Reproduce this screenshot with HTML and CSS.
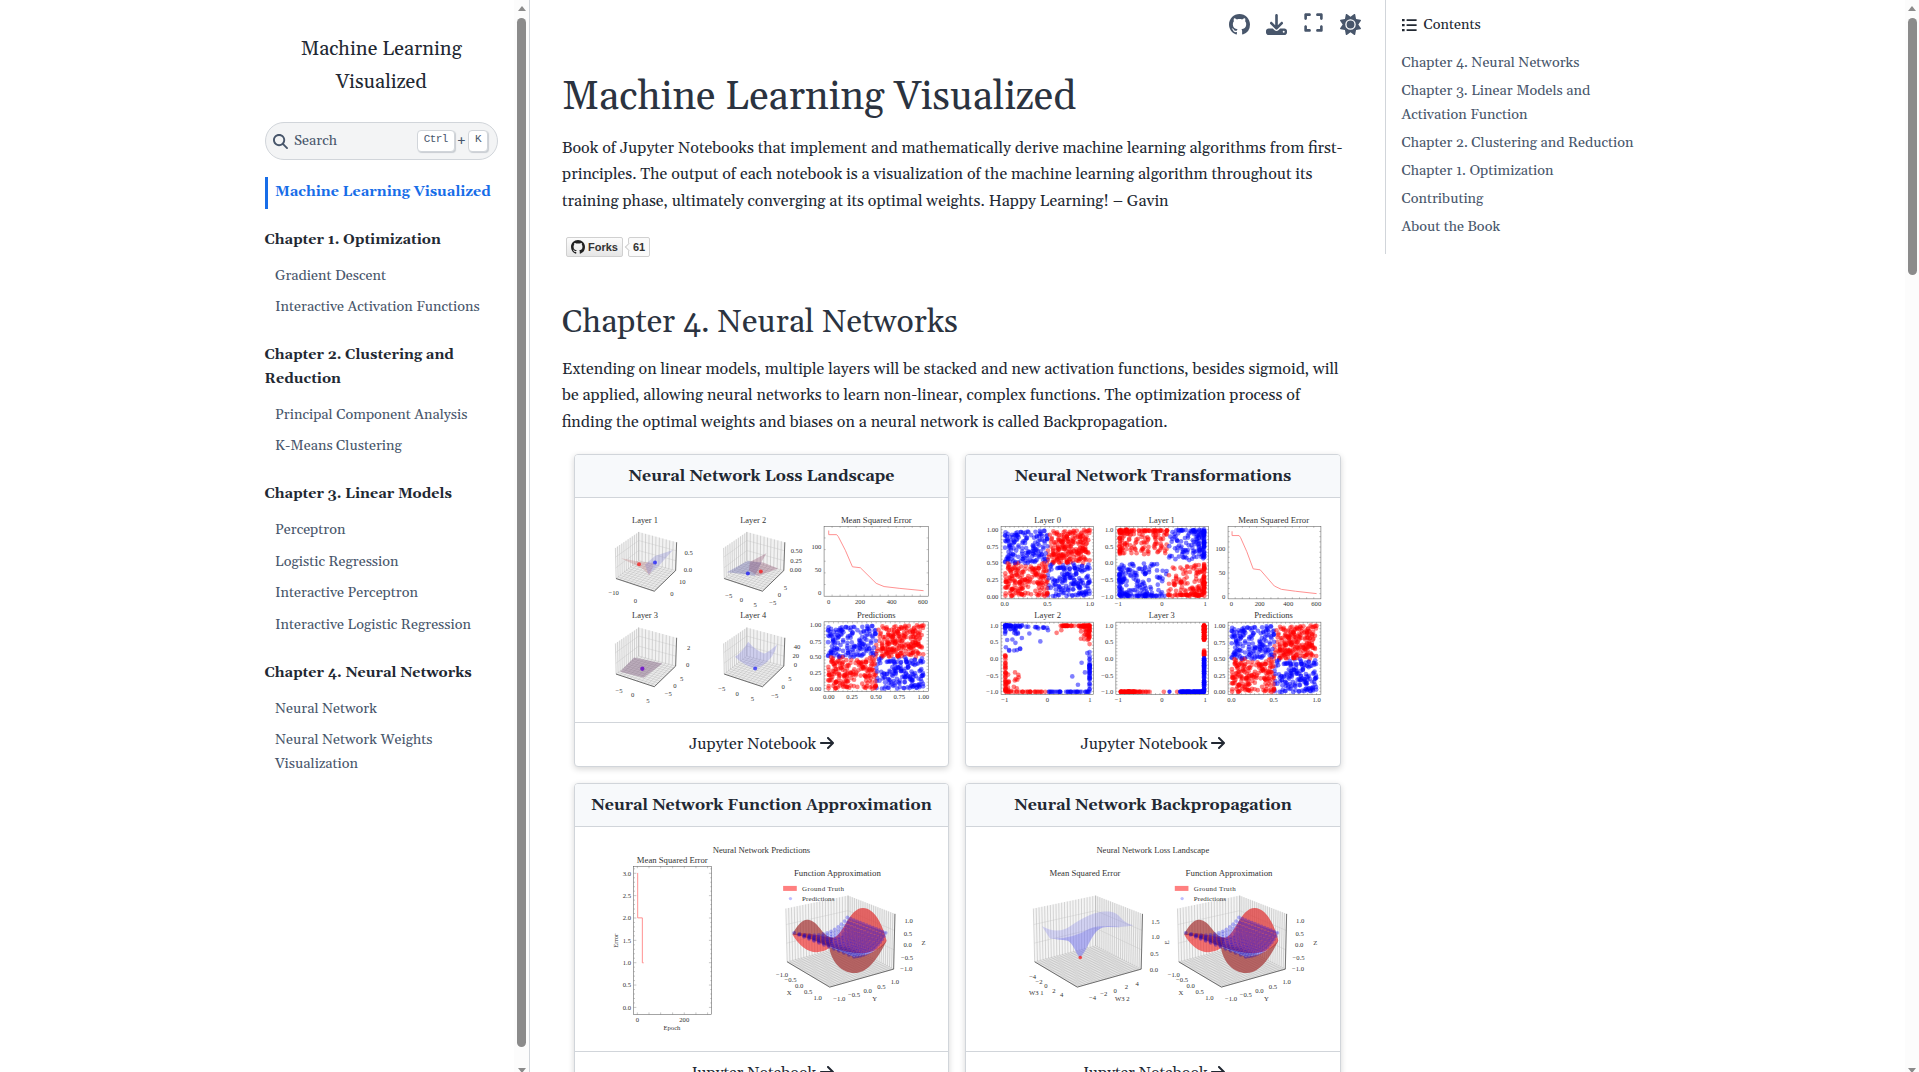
FILE: index.html
```html
<!DOCTYPE html>
<html lang="en">
<head>
<meta charset="utf-8">
<title>Machine Learning Visualized</title>
<link rel="stylesheet" href="styles.css">
</head>
<body>
<svg class="defs" aria-hidden="true">
  <symbol id="i-github" viewBox="0 0 16 16"><path d="M8 0C3.58 0 0 3.58 0 8c0 3.54 2.29 6.53 5.47 7.59.4.07.55-.17.55-.38 0-.19-.01-.82-.01-1.49-2.01.37-2.53-.49-2.69-.94-.09-.23-.48-.94-.82-1.13-.28-.15-.68-.52-.01-.53.63-.01 1.08.58 1.23.82.72 1.21 1.87.87 2.33.66.07-.52.28-.87.51-1.07-1.78-.2-3.64-.89-3.64-3.95 0-.87.31-1.59.82-2.15-.08-.2-.36-1.02.08-2.12 0 0 .67-.21 2.2.82.64-.18 1.32-.27 2-.27s1.36.09 2 .27c1.53-1.04 2.2-.82 2.2-.82.44 1.1.16 1.92.08 2.12.51.56.82 1.27.82 2.15 0 3.07-1.87 3.75-3.65 3.95.29.25.54.73.54 1.48 0 1.07-.01 1.93-.01 2.2 0 .21.15.46.55.38A8.01 8.01 0 0016 8c0-4.42-3.58-8-8-8z"/></symbol>
  <symbol id="i-arrow" viewBox="0 0 448 512"><path d="M438.6 278.6c12.5-12.5 12.5-32.8 0-45.3l-160-160c-12.5-12.5-32.8-12.5-45.3 0s-12.5 32.8 0 45.3L338.8 224 32 224c-17.7 0-32 14.3-32 32s14.3 32 32 32l306.7 0L233.4 393.4c-12.5 12.5-12.5 32.8 0 45.3s32.8 12.5 45.3 0l160-160z"/></symbol>
</svg>
<div class="page">
  <aside class="sidebar">
    <div class="sidebar-inner">
      <div class="brand">Machine Learning<br>Visualized</div>
      <div class="search">
        <svg class="search-icon" viewBox="0 0 512 512"><path d="M416 208c0 45.9-14.9 88.3-40 122.7L502.6 457.4c12.5 12.5 12.5 32.8 0 45.3s-32.8 12.5-45.3 0L330.7 376c-34.4 25.2-76.8 40-122.7 40C93.1 416 0 322.9 0 208S93.1 0 208 0S416 93.1 416 208zM208 352a144 144 0 1 0 0-288 144 144 0 1 0 0 288z"/></svg>
        <span class="search-label">Search</span>
        <kbd>Ctrl</kbd><span class="plus">+</span><kbd>K</kbd>
      </div>
      <nav class="nav">
        <a class="item active">Machine Learning Visualized</a>
        <p class="caption">Chapter 1. Optimization</p>
        <a class="item">Gradient Descent</a>
        <a class="item">Interactive Activation Functions</a>
        <p class="caption">Chapter 2. Clustering and<br>Reduction</p>
        <a class="item">Principal Component Analysis</a>
        <a class="item">K-Means Clustering</a>
        <p class="caption">Chapter 3. Linear Models</p>
        <a class="item">Perceptron</a>
        <a class="item">Logistic Regression</a>
        <a class="item">Interactive Perceptron</a>
        <a class="item">Interactive Logistic Regression</a>
        <p class="caption">Chapter 4. Neural Networks</p>
        <a class="item">Neural Network</a>
        <a class="item">Neural Network Weights<br>Visualization</a>
      </nav>
    </div>
    <div class="scrollbar"><i class="up"></i><b class="thumb side-thumb"></b><i class="down"></i></div>
  </aside>

  <main class="main">
    <div class="toolbar">
      <svg class="tool" viewBox="0 0 16 16"><use href="#i-github"/></svg>
      <svg class="tool" viewBox="0 0 512 512"><path d="M288 32c0-17.7-14.3-32-32-32s-32 14.3-32 32V274.7l-73.4-73.4c-12.5-12.5-32.8-12.5-45.3 0s-12.5 32.8 0 45.3l128 128c12.5 12.5 32.8 12.5 45.3 0l128-128c12.5-12.5 12.5-32.8 0-45.3s-32.8-12.5-45.3 0L288 274.7V32zM64 352c-35.3 0-64 28.7-64 64v32c0 35.3 28.7 64 64 64H448c35.3 0 64-28.7 64-64V416c0-35.3-28.7-64-64-64H346.5l-45.3 45.3c-25 25-65.5 25-90.5 0L165.5 352H64zm368 56a24 24 0 1 1 0 48 24 24 0 1 1 0-48z"/></svg>
      <svg class="tool expand" viewBox="0 0 448 512"><path d="M32 32C14.3 32 0 46.3 0 64v96c0 17.7 14.3 32 32 32s32-14.3 32-32V96h64c17.7 0 32-14.3 32-32s-14.3-32-32-32H32zM64 352c0-17.7-14.3-32-32-32s-32 14.3-32 32v96c0 17.7 14.3 32 32 32h96c17.7 0 32-14.3 32-32s-14.3-32-32-32H64V352zM320 32c-17.7 0-32 14.3-32 32s14.3 32 32 32h64v64c0 17.7 14.3 32 32 32s32-14.3 32-32V64c0-17.7-14.3-32-32-32H320zM448 352c0-17.7-14.3-32-32-32s-32 14.3-32 32v64H320c-17.7 0-32 14.3-32 32s14.3 32 32 32h96c17.7 0 32-14.3 32-32V352z"/></svg>
      <svg class="tool" viewBox="0 0 512 512"><path d="M361.5 1.2c5 2.1 8.6 6.6 9.6 11.9L391 121l107.9 19.8c5.3 1 9.8 4.6 11.9 9.6s1.5 10.7-1.6 15.2L446.9 256l62.3 90.3c3.1 4.5 3.7 10.2 1.6 15.2s-6.6 8.6-11.9 9.6L391 391 371.1 498.9c-1 5.3-4.6 9.8-9.6 11.9s-10.7 1.5-15.2-1.6L256 446.9l-90.3 62.3c-4.5 3.1-10.2 3.7-15.2 1.6s-8.6-6.6-9.6-11.9L121 391 13.1 371.1c-5.3-1-9.8-4.6-11.9-9.6s-1.5-10.7 1.6-15.2L65.1 256 2.8 165.7c-3.1-4.5-3.7-10.2-1.6-15.2s6.6-8.6 11.9-9.6L121 121 140.9 13.1c1-5.3 4.6-9.8 9.6-11.9s10.7-1.5 15.2 1.6L256 65.1 346.3 2.8c4.5-3.1 10.2-3.7 15.2-1.6zM160 256a96 96 0 1 1 192 0 96 96 0 1 1 -192 0zm224 0a128 128 0 1 0 -256 0 128 128 0 1 0 256 0z"/></svg>
    </div>
    <article class="article">
      <h1>Machine Learning Visualized</h1>
      <p class="text">Book of Jupyter Notebooks that implement and mathematically derive machine learning algorithms from first-<br>principles. The output of each notebook is a visualization of the machine learning algorithm throughout its<br>training phase, ultimately converging at its optimal weights. Happy Learning! – Gavin</p>
      <div class="forks">
        <span class="fork-btn"><svg class="fork-icon" viewBox="0 0 16 16"><use href="#i-github"/></svg>Forks</span>
        <span class="fork-count">61</span>
      </div>
      <h2>Chapter 4. Neural Networks</h2>
      <p class="text">Extending on linear models, multiple layers will be stacked and new activation functions, besides sigmoid, will<br>be applied, allowing neural networks to learn non-linear, complex functions. The optimization process of<br>finding the optimal weights and biases on a neural network is called Backpropagation.</p>
      <div class="cards">
        <section class="card">
          <h3>Neural Network Loss Landscape</h3>
          <svg class="plot" id="plot-landscape" viewBox="30 158 1120 673"></svg>
          <a class="card-link">Jupyter Notebook <svg class="arrow" viewBox="0 0 448 512"><use href="#i-arrow"/></svg></a>
        </section>
        <section class="card">
          <h3>Neural Network Transformations</h3>
          <svg class="plot" id="plot-transform" viewBox="33 158 1120 673"></svg>
          <a class="card-link">Jupyter Notebook <svg class="arrow" viewBox="0 0 448 512"><use href="#i-arrow"/></svg></a>
        </section>
        <section class="card">
          <h3>Neural Network Function Approximation</h3>
          <svg class="plot" id="plot-approx" viewBox="30 155 1120 673"></svg>
          <a class="card-link">Jupyter Notebook <svg class="arrow" viewBox="0 0 448 512"><use href="#i-arrow"/></svg></a>
        </section>
        <section class="card">
          <h3>Neural Network Backpropagation</h3>
          <svg class="plot" id="plot-backprop" viewBox="33 155 1120 673"></svg>
          <a class="card-link">Jupyter Notebook <svg class="arrow" viewBox="0 0 448 512"><use href="#i-arrow"/></svg></a>
        </section>
      </div>
    </article>
  </main>

  <aside class="toc">
    <div class="toc-title">
      <svg class="list-icon" viewBox="0 0 16 14"><path d="M0 1h2.6v2.2H0zM0 6h2.6v2.2H0zM0 11h2.6v2.2H0zM4.6 1.2h10v1.8h-10zM4.6 6.2h10v1.8h-10zM4.6 11.2h10v1.8h-10z"/></svg>Contents
    </div>
    <a>Chapter 4. Neural Networks</a>
    <a>Chapter 3. Linear Models and<br>Activation Function</a>
    <a>Chapter 2. Clustering and Reduction</a>
    <a>Chapter 1. Optimization</a>
    <a>Contributing</a>
    <a>About the Book</a>
  </aside>
  <div class="scrollbar page-bar"><i class="up"></i><b class="thumb page-thumb"></b><i class="down"></i></div>
</div>
<script src="plots.js"></script>
</body>
</html>
```
FILE: styles.css
```css
* { box-sizing: border-box; }
body {
  margin: 0;
  height: 1072px;
  overflow: hidden;
  background: #fff;
  color: #222832;
  font-family: Georgia, Gelasio, "Liberation Serif", serif;
  font-size: 16px;
  line-height: 1.65;
}
.defs { display: none; }
.page { display: flex; height: 1072px; }
h1, h2, h3, p { margin: 0; font-weight: 400; }

.sidebar {
  display: flex;
  justify-content: space-between;
  width: 530px;
  flex: none;
  border-right: 1px solid #d1d5da;
}
.sidebar-inner { width: 498px; padding: 33px 0 0 264.5px; flex: none; }
.brand { font-size: 20px; line-height: 33px; text-align: center; height: 66px; }
.search {
  display: flex;
  align-items: center;
  height: 38px;
  margin-top: 23px;
  padding: 0 9px 0 7px;
  border: 1px solid #d1d5da;
  border-radius: 19px;
  background: #f3f4f5;
  color: #48566b;
}
.search-icon { width: 15px; height: 15px; fill: #48566b; }
.search-label { flex: 1; margin-left: 6.5px; padding-top: 1px; font-size: 14.4px; }
kbd {
  height: 22px;
  padding: 0 6px;
  border: 1px solid #d1d5da;
  border-radius: 4px;
  background: #fff;
  box-shadow: 1px 1px 1px #c9cdd2;
  font: 11px/17px "Liberation Mono", monospace;
  letter-spacing: -.6px;
}
.plus { margin: 0 2px; padding-top: 2px; font-size: 14.4px; }
.nav { padding-top: 17px; font-size: 14.4px; line-height: 23.76px; }
.item { display: block; padding: 4px 0 4px 10.5px; color: #48566b; white-space: nowrap; }
.item.active {
  padding-left: 7.5px;
  border-left: 3px solid #176de8;
  color: #176de8;
  font-weight: 700;
}
.caption { margin: 20px 0 8px; font-weight: 700; white-space: nowrap; }

.scrollbar {
  display: flex;
  flex-direction: column;
  align-items: center;
  width: 15px;
  height: 1072px;
  padding-top: 6px;
  background: #fcfcfc;
}
.up { border: 4.5px solid transparent; border-top: 0; border-bottom: 5px solid #8b8b8b; }
.down { margin-top: auto; margin-bottom: -1px; border: 4.5px solid transparent; border-bottom: 0; border-top: 5px solid #8b8b8b; }
.thumb { width: 9px; margin-top: 7px; border-radius: 5px; background: #8b8b8b; }
.side-thumb { height: 1029px; }
.page-thumb { height: 257px; }
.page-bar { margin-left: auto; width: 14px; }

.main { width: 855px; flex: none; }
.toolbar {
  display: flex;
  align-items: center;
  justify-content: flex-end;
  gap: 16px;
  height: 48px;
  padding-right: 24px;
}
.tool { width: 21px; height: 21px; fill: #48566b; }
.expand { position: relative; top: -1.5px; }
.article { padding: 24px 38px 0 32px; }
h1 { font-size: 40px; line-height: 52px; color: #2b3340; }
.text { margin-top: 11px; height: 79px; line-height: 26.4px; white-space: nowrap; }
.forks {
  display: flex;
  gap: 5px;
  margin: 23px 0 0 4px;
  height: 20px;
  font: 700 11px/18px "Liberation Sans", Arial, sans-serif;
  color: #333;
}
.fork-btn {
  display: flex;
  align-items: center;
  gap: 3px;
  width: 57px;
  padding-left: 4px;
  border: 1px solid #d0d0d0;
  border-radius: 2px;
  background: linear-gradient(#fcfcfc, #e6e6e6);
}
.fork-icon { width: 14px; height: 14px; fill: #222; }
.fork-count {
  position: relative;
  width: 22px;
  border: 1px solid #d0d0d0;
  border-radius: 2px;
  background: #fafafa;
  text-align: center;
}
.fork-count::before {
  content: "";
  position: absolute;
  left: -3.5px;
  top: 6px;
  width: 5px;
  height: 5px;
  border: solid #d0d0d0;
  border-width: 0 0 1px 1px;
  background: #fafafa;
  transform: rotate(45deg);
}
h2 { margin-top: 45px; font-size: 32px; line-height: 42px; color: #2b3340; }
h2 + .text { margin-top: 12px; }
.cards {
  display: grid;
  grid-template-columns: 375px 376px;
  gap: 16px;
  margin: 19px 0 0 12px;
}
.card {
  display: flex;
  flex-direction: column;
  height: 313px;
  border: 1px solid #d1d5da;
  border-radius: 4px;
  box-shadow: 0 2px 6px rgba(0, 0, 0, .16);
  background: #fff;
  overflow: hidden;
}
h3 {
  height: 43px;
  border-bottom: 1px solid #d1d5da;
  background: #f7f9fb;
  font-size: 16px;
  font-weight: 700;
  line-height: 42px;
  text-align: center;
  white-space: nowrap;
}
.plot { display: block; width: 373px; height: 224px; }
.plot text { font-family: "Liberation Serif", serif; fill: #333; }
.card-link { flex: 1; border-top: 1px solid #d1d5da; line-height: 42px; text-align: center; }
.arrow { width: 14px; height: 16px; vertical-align: -2px; fill: #222832; }

.toc {
  width: 262px;
  height: 254px;
  padding: 12px 0 0 15.5px;
  border-left: 1px solid #d1d5da;
  font-size: 14.4px;
  line-height: 24px;
  white-space: nowrap;
}
.toc a { display: block; padding: 2px 0; color: #48566b; }
.toc-title { display: flex; align-items: center; height: 26px; margin-bottom: 10.5px; }
.list-icon { width: 16px; height: 14px; margin-right: 6px; fill: #222832; }
```
FILE: plots.js
```js
const RED = '#ff0000', BLUE = '#0000ff';
let seed = 7;
const rnd = () => (seed = (seed * 16807) % 2147483647) / 2147483647;
const lerp = (a, b, t) => [a[0] + (b[0] - a[0]) * t, a[1] + (b[1] - a[1]) * t];
const dot = (x, y, c, r = 7, o = .5) => `<circle cx="${x.toFixed(1)}" cy="${y.toFixed(1)}" r="${r}" fill="${c}" fill-opacity="${o}"/>`;
const seg = (a, b, c = '#999', w = 1, o = 1) => `<path d="M${a}L${b}" stroke="${c}" stroke-width="${w}" opacity="${o}" fill="none"/>`;
const poly = (pts, fill, o = 1) => `<path d="M${pts.join('L')}Z" fill="${fill}" fill-opacity="${o}"/>`;
const title = (s, x, y, w) => `<text x="${x - w / 2}" y="${y + 8}" font-size="25" textLength="${w}" lengthAdjust="spacingAndGlyphs">${s}</text>`;
const tick = (s, x, y) => `<text x="${x}" y="${y + 7}" font-size="20" text-anchor="middle">${s}</text>`;
const labels = list => list.map(l => tick(...l)).join('');

/* Plot frame with inward ticks on all sides, labels outside. */
function frame(x0, y0, x1, y1, nx, ny, xs, ys) {
  let s = `<rect x="${x0}" y="${y0}" width="${x1 - x0}" height="${y1 - y0}" fill="none" stroke="#555" stroke-width="1.6"/>`;
  for (let i = 1; i < nx; i++) { const x = x0 + (x1 - x0) * i / nx; s += seg([x, y0], [x, y0 + 5], '#555') + seg([x, y1], [x, y1 - 5], '#555'); }
  for (let i = 1; i < ny; i++) { const y = y0 + (y1 - y0) * i / ny; s += seg([x0, y], [x0 + 5, y], '#555') + seg([x1, y], [x1 - 5, y], '#555'); }
  xs.forEach(([t, x]) => s += tick(t, x, y1 + 16));
  ys.forEach(([t, y]) => s += `<text x="${x0 - 8}" y="${y + 7}" font-size="20" text-anchor="end">${t}</text>`);
  return s;
}

const xor = [];
while (xor.length < 720) {
  const x = rnd(), y = rnd();
  if (Math.hypot(x - .59, y - .35) < .06) continue;
  xor.push([x, y, (x < .5) === (y > .5) ? BLUE : RED]);
}
const quadrants = (x0, y0, x1, y1) => xor.map(([x, y, c]) => dot(x0 + x * (x1 - x0), y1 - y * (y1 - y0), c)).join('');

/* Isometric box: L/B/R top corners, l/f/r floor corners, b the back floor corner. */
function box(p, n) {
  let s = poly([p.L, p.B, p.b, p.l], '#f5f5f5') + poly([p.B, p.R, p.r, p.b], '#f2f2f2') + poly([p.l, p.b, p.r, p.f], '#ececec');
  for (let i = 0; i <= n; i++) {
    const t = i / n;
    s += seg(lerp(p.L, p.B, t), lerp(p.l, p.b, t), '#999', 1.5, .75) + seg(lerp(p.B, p.R, t), lerp(p.b, p.r, t), '#999', 1.5, .75);
    s += seg(lerp(p.l, p.b, t), lerp(p.f, p.r, t), '#aaa', 1) + seg(lerp(p.l, p.f, t), lerp(p.b, p.r, t), '#aaa', 1);
  }
  for (const t of [.3, .65]) s += seg(lerp(p.L, p.l, t), lerp(p.B, p.b, t), '#bbb') + seg(lerp(p.B, p.b, t), lerp(p.R, p.r, t), '#bbb');
  return s + seg(p.l, p.f, '#333', 2) + seg(p.f, p.r, '#333', 2) + seg(p.R, p.r, '#444', 2);
}
const small = (dx, dy) => {
  const q = (x, y) => [x + dx, y + dy];
  return box({ L: q(151, 308), B: q(221, 260), R: q(335, 291), l: q(153, 400), b: q(221, 346), r: q(332, 376), f: q(268, 438) }, 11);
};
const big = dx => {
  const q = (x, y) => [x + dx, y];
  return box({ L: q(663, 400), B: q(850, 361), R: q(991, 416), l: q(667, 560), b: q(850, 512), r: q(987, 582), f: q(795, 636) }, 22);
};

const MSE = [[0, 135], [0, 126], [50, 126], [60, 122], [105, 92], [150, 56], [200, 54], [300, 20], [350, 13], [450, 9], [600, 4]];
const curve = (x0, x1, yz, yh) => `<path d="M${MSE.map(([x, y]) => [x0 + (x1 - x0) * x / 600, yz + (yh - yz) * y / 100]).join('L')}" fill="none" stroke="#ff8080" stroke-width="2.6"/>`;
const put = (id, s) => document.getElementById(id).innerHTML = s;

put('plot-landscape',
  title('Layer 1', 240, 224, 78) + title('Layer 2', 565, 224, 78) + title('Layer 3', 240, 511, 78) + title('Layer 4', 565, 511, 78) +
  title('Mean Squared Error', 935, 224, 213) + title('Predictions', 935, 511, 116) +
  small(0, 0) + small(325, 0) + small(0, 287) + small(325, 287) +
  poly([[168, 339], [221, 349], [268, 353], [254, 390], [232, 370]], '#c08080', .35) + poly([[250, 388], [240, 358], [270, 332], [324, 314], [285, 358]], '#8080d0', .32) +
  dot(222, 357, RED, 6, .65) + dot(270, 352, BLUE, 6, .65) +
  poly([[486, 381], [548, 347], [590, 352], [570, 392], [548, 388]], '#7070b0', .42) + poly([[555, 350], [605, 324], [590, 350], [640, 370], [580, 392], [552, 375]], '#905070', .35) +
  dot(549, 385, BLUE, 6, .65) + dot(588, 379, RED, 6, .65) +
  poly([[165, 680], [207, 637], [292, 655], [236, 698]], '#806080', .45) + dot(232, 671, '#60c', 6.5, .8) +
  `<path d="M510 635Q530 625 550 590Q575 620 600 625Q620 615 637 598Q625 650 572 671Q535 660 510 635Z" fill="#7070e0" fill-opacity=".27"/>` + dot(571, 670, BLUE, 6, .6) +
  labels([['0.5', 371, 321], ['0.0', 369, 374], ['10', 352, 409], ['0', 321, 444], ['−10', 146, 443], ['0', 211, 466], ['0.50', 695, 315], ['0.25', 694, 346], ['0.00', 692, 373], ['5', 662, 427], ['0', 644, 447], ['−5', 624, 471], ['−5', 492, 451], ['0', 530, 463], ['5', 571, 479],
    ['2', 371, 607], ['0', 368, 660], ['5', 350, 701], ['0', 330, 722], ['−5', 310, 747], ['−5', 162, 737], ['0', 203, 750], ['5', 249, 767], ['40', 697, 604], ['20', 693, 633], ['0', 692, 660], ['5', 675, 701], ['0', 655, 724], ['−5', 630, 752], ['−5', 471, 732], ['0', 517, 745], ['5', 563, 762]]) +
  frame(778, 243, 1091, 453, 13, 6, [['0', 792], ['200', 886], ['400', 981], ['600', 1075]], [['100', 304], ['50', 374], ['0', 442]]) + curve(792, 1077, 442, 304) +
  frame(778, 530, 1091, 740, 22, 22, [['0.00', 792], ['0.25', 862], ['0.50', 934], ['0.75', 1004], ['1.00', 1076]], [['1.00', 540], ['0.75', 589], ['0.50', 635], ['0.25', 683], ['0.00', 730]]) + quadrants(790, 540, 1077, 731));

/* Points squeezed toward a corner or an edge after each layer's activation. */
function corner(n, cx, cy, dx, dy, c, k) {
  let s = '';
  for (let i = 0; i < n; i++) s += dot(cx + dx * Math.pow(rnd(), k), cy + dy * Math.pow(rnd(), k), c);
  return s;
}
const edge = (n, x, y, dx, dy, c, k = 1) => Array.from({ length: n }, () => { const t = Math.pow(rnd(), k); return dot(x + dx * t, y + dy * t, c); }).join('');
put('plot-transform',
  title('Layer 0', 278, 224, 80) + title('Layer 1', 621, 224, 78) + title('Mean Squared Error', 957, 224, 213) +
  title('Layer 2', 278, 512, 80) + title('Layer 3', 621, 512, 78) + title('Predictions', 957, 512, 116) +
  frame(138, 243, 416, 461, 21, 22, [['0.0', 149], ['0.5', 277], ['1.0', 405]], [['1.00', 254], ['0.75', 304], ['0.50', 353], ['0.25', 403], ['0.00', 453]]) + quadrants(150, 254, 405, 453) +
  frame(483, 243, 761, 461, 21, 22, [['−1', 490], ['0', 621], ['1', 751]], [['1.0', 254], ['0.5', 304], ['0.0', 353], ['−0.5', 403], ['−1.0', 453]]) +
  corner(120, 493, 253, 147, 75, RED, 1.5) + edge(34, 493, 256, 145, 0, RED) + edge(18, 495, 255, 0, 75, RED) +
  corner(120, 748, 254, -107, 94, BLUE, 1.6) + edge(34, 748, 250, 0, 88, BLUE) +
  corner(80, 493, 453, 100, -75, BLUE, 1.2) + edge(36, 493, 452, 140, 0, BLUE) + edge(22, 494, 365, 0, 85, BLUE) + corner(32, 497, 350, 110, 40, BLUE, 1.1) + corner(14, 640, 450, -36, -75, BLUE, 1) +
  corner(120, 749, 453, -108, -95, RED, 1.6) + edge(30, 748, 350, 0, 100, RED) + edge(24, 640, 449, 108, 0, RED) +
  frame(820, 243, 1099, 461, 13, 14, [['0', 830], ['200', 915], ['400', 1001], ['600', 1085]], [['100', 310], ['50', 382], ['0', 453]]) + curve(832, 1086, 451, 308) +
  frame(138, 531, 416, 749, 21, 22, [['−1', 149], ['0', 277], ['1', 405]], [['1.0', 541], ['0.5', 591], ['0.0', 641], ['−0.5', 691], ['−1.0', 740]]) +
  corner(45, 150, 541, 55, 80, BLUE, 3) + edge(20, 150, 541, 145, 8, BLUE, 1.3) + edge(32, 404, 620, 0, 118, BLUE) + edge(34, 280, 740, 124, 0, BLUE) +
  edge(34, 312, 542, 92, 0, RED) + corner(45, 404, 541, -28, 44, RED, 2) + edge(25, 151, 630, 0, 108, RED) + corner(24, 151, 739, 48, -60, RED, 2) + edge(28, 150, 740, 130, 0, RED) +
  [[256, 589], [186, 615], [162, 615], [223, 565], [250, 550], [279, 555], [397, 624], [380, 653], [390, 682], [352, 694], [369, 719], [183, 566]].map(p => dot(...p, BLUE)).join('') +
  [[150, 631], [180, 682], [182, 702], [305, 563], [319, 555], [404, 597]].map(p => dot(...p, RED)).join('') +
  frame(483, 531, 761, 749, 21, 22, [['−1', 490], ['0', 621], ['1', 751]], [['1.0', 541], ['0.5', 591], ['0.0', 641], ['−0.5', 691], ['−1.0', 740]]) +
  edge(80, 748, 540, 0, 45, RED) + edge(12, 748, 612, 0, 20, RED) + edge(55, 497, 740, 46, 0, RED) + edge(15, 535, 740, 54, 0, RED) + dot(627, 740, RED) + dot(667, 740, RED) +
  edge(60, 748, 640, 0, 98, BLUE) + edge(85, 676, 740, 72, 0, BLUE) + dot(644, 740, BLUE, 6.5, .8) +
  frame(820, 531, 1099, 749, 21, 22, [['0.0', 830], ['0.5', 957], ['1.0', 1086]], [['1.00', 541], ['0.75', 592], ['0.50', 641], ['0.25', 691], ['0.00', 740]]) + quadrants(831, 541, 1086, 741));

/* Saddle surface with the predicted sheet of dots on top. */
function saddle(dx) {
  let s = title('Function Approximation', 818 + dx, 295, 261) +
    `<rect x="${655 + dx}" y="332" width="41" height="15" fill="#ff8080"/>` + dot(677 + dx, 370, BLUE, 5, .25) + big(dx) +
    `<text x="${712 + dx}" y="347" font-size="21" textLength="126">Ground Truth</text><text x="${712 + dx}" y="377" font-size="21" textLength="97">Predictions</text>` +
    `<g transform="translate(${dx} 0)"><path d="M683 478C705 515 730 532 757 531C780 529 792 522 796 515L806 488C770 487 730 465 683 478Z" fill="#f02828" fill-opacity=".65"/>` +
    `<path d="M806 488C840 475 853 398 895 398C930 398 955 450 966 497C940 540 880 545 796 515Z" fill="#e03838" fill-opacity=".75"/>` +
    `<path d="M683 478C700 445 715 434 727 434C762 434 770 487 806 488L796 515C760 500 720 482 683 478Z" fill="#a02a2a" fill-opacity=".68"/>` +
    `<path d="M966 497C935 560 905 594 870 594C830 594 800 560 793 515L868 545Q930 540 966 497Z" fill="#a02a2a" fill-opacity=".68"/>` +
    `<path d="M766 478Q800 495 832 482L850 430L965 472Q930 540 868 545L795 515Z" fill="#4018a0" fill-opacity=".25"/>`;
  const quad = (a, c, b, t) => lerp(lerp(a, c, t), lerp(c, b, t), t);
  for (let i = 0; i <= 13; i++) for (let j = 0; j <= 12; j++) {
    const p = lerp(quad([688, 473], [795, 500], [848, 427], i / 13), quad([868, 545], [930, 540], [963, 473], i / 13), j / 12);
    s += dot(p[0], p[1], i < 4 ? '#1000c8' : BLUE, 5.8, i < 4 ? .36 : .28);
  }
  return s + '</g>' + labels([['1.0', 1032 + dx, 437], ['0.5', 1030 + dx, 475], ['0.0', 1029 + dx, 510], ['−0.5', 1027 + dx, 547], ['−1.0', 1025 + dx, 582], ['Z', 1077 + dx, 502],
    ['−1.0', 652 + dx, 598], ['−0.5', 677 + dx, 614], ['0.0', 703 + dx, 631], ['0.5', 730 + dx, 650], ['1.0', 759 + dx, 667], ['X', 673 + dx, 652],
    ['−1.0', 824 + dx, 671], ['−0.5', 868 + dx, 660], ['0.0', 909 + dx, 646], ['0.5', 950 + dx, 635], ['1.0', 991 + dx, 621], ['Y', 930 + dx, 671]]);
}
put('plot-approx',
  title('Neural Network Predictions', 590, 225, 293) + title('Mean Squared Error', 322, 254, 213) +
  frame(206, 273, 440, 718, 0, 0, [['0', 217], ['200', 358]], [['3.0', 294], ['2.5', 361], ['2.0', 428], ['1.5', 496], ['1.0', 563], ['0.5', 630], ['0.0', 697]]) +
  Array.from({ length: 32 }, (_, i) => { const y = 697 - i * 13.43, n = i % 5 ? 4 : 8; return seg([206, y], [206 + n, y], '#555') + seg([440, y], [440 - n, y], '#555'); }).join('') +
  [217, 252, 287, 323, 358, 393, 428].map(x => seg([x, 718], [x, 712], '#555') + seg([x, 273], [x, 279], '#555')).join('') +
  '<path d="M218 293V428H232V563H236" fill="none" stroke="#ff8080" stroke-width="2.6"/>' +
  tick('Epoch', 321, 759) + '<text transform="translate(159 497) rotate(-90)" font-size="20" text-anchor="middle">Error</text>' + saddle(0));
put('plot-backprop',
  title('Neural Network Loss Landscape', 594, 226, 339) + title('Mean Squared Error', 390, 295, 213) + big(-428) +
  '<path d="M261 453Q310 480 350 450Q410 410 450 409C500 405 490 440 536 450Q480 460 450 454C410 465 405 510 376 547C360 535 355 495 330 495Q300 492 285 490Z" fill="#7070ee" fill-opacity=".25"/>' +
  '<path d="M285 490Q345 495 405 460Q440 448 500 456Q440 450 425 468C405 490 395 530 376 547C360 535 355 495 330 495Z" fill="#6060ee" fill-opacity=".3"/>' + dot(376, 547, RED, 5.5, .65) +
  labels([['1.5', 602, 438], ['1.0', 602, 485], ['0.5', 599, 536], ['0.0', 597, 583], ['−4', 233, 604], ['−2', 252, 619], ['0', 273, 631], ['2', 297, 647], ['4', 320, 660], ['W3 1', 244, 653], ['−4', 413, 667], ['−2', 447, 656], ['0', 481, 646], ['2', 515, 635], ['4', 547, 627], ['W3 2', 502, 671]]) +
  '<text transform="translate(644 502) rotate(-90)" font-size="20" text-anchor="middle">E</text>' + saddle(5));
```
